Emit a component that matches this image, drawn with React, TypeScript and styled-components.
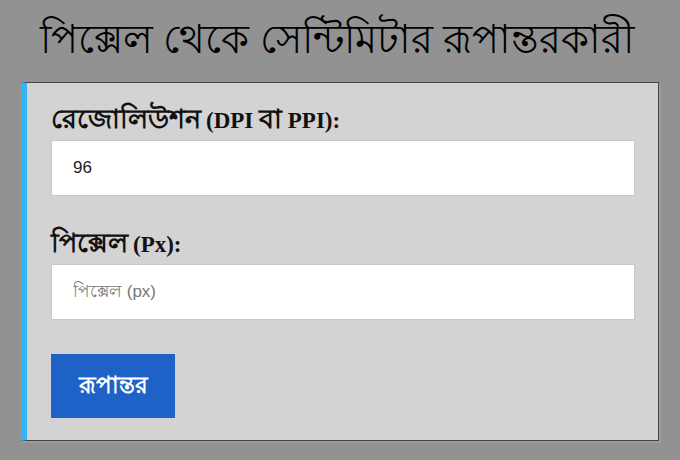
import styled, { createGlobalStyle } from 'styled-components';

const GlobalStyle = createGlobalStyle`
    html, body {
        margin: 0;
        padding: 0;
        background: #929292;
    }
    body {
        font-family: "Liberation Serif", "Noto Sans", serif;
    }
`;

const Page = styled.div`
    width: 680px;
    height: 460px;
    box-sizing: border-box;
    padding: 0 21px;
`;

const Title = styled.h1`
    margin: 0 6px 0 0;
    height: 82px;
    display: flex;
    align-items: center;
    justify-content: center;
    font-family: "Noto Sans", "Liberation Sans", sans-serif;
    font-weight: normal;
    font-size: 40px;
    color: #000;
`;

const Card = styled.div`
    background: #d3d3d3;
    border-left: 6px solid #33b5f5;
    border-top: 1px solid #444;
    border-right: 1px solid #444;
    border-bottom: 1px solid #444;
    box-shadow: 2px 2px 0 #9c9c9c;
    padding: 19px 23px 22px 24px;
    display: flex;
    flex-direction: column;
`;

const Field = styled.div<{ $gap: number }>`
    display: flex;
    flex-direction: column;
    margin-bottom: ${p => p.$gap}px;
`;

const Label = styled.label`
    display: flex;
    align-items: baseline;
    gap: 5px;
    height: 32px;
    line-height: 32px;
    font-family: "Liberation Serif", "Noto Sans", serif;
    font-weight: bold;
    font-size: 23px;
    color: #111;
    margin-bottom: 6px;
    white-space: pre;
`;

const BnLabel = styled.span`
    font-family: "Noto Sans", sans-serif;
    font-size: 27px;
`;

const Input = styled.input`
    height: 56px;
    box-sizing: border-box;
    border: 1px solid #c8c8c8;
    background: #fff;
    padding: 0 21px;
    font-family: "Liberation Sans", "Noto Sans", sans-serif;
    font-size: 17px;
    color: #222;
    outline: none;
    &::placeholder {
        color: #777;
    }
`;

const Button = styled.button`
    align-self: flex-start;
    width: 124px;
    height: 64px;
    border: none;
    background: #1e62c8;
    color: #fff;
    font-family: "Noto Sans", sans-serif;
    font-weight: bold;
    font-size: 23px;
    cursor: pointer;
`;

const App = (): JSX.Element => {
    return (
        <Page>
            <GlobalStyle />
            <Title>পিক্সেল থেকে সেন্টিমিটার রূপান্তরকারী</Title>
            <Card>
                <Field $gap={30}>
                    <Label>
                        <BnLabel>রেজোলিউশন</BnLabel>
                        <span>(DPI <BnLabel>বা</BnLabel> PPI):</span>
                    </Label>
                    <Input defaultValue="96" />
                </Field>
                <Field $gap={34}>
                    <Label>
                        <BnLabel>পিক্সেল</BnLabel>
                        <span>(Px):</span>
                    </Label>
                    <Input placeholder="পিক্সেল (px)" />
                </Field>
                <Button>রূপান্তর</Button>
            </Card>
        </Page>
    );
};

export default App;
